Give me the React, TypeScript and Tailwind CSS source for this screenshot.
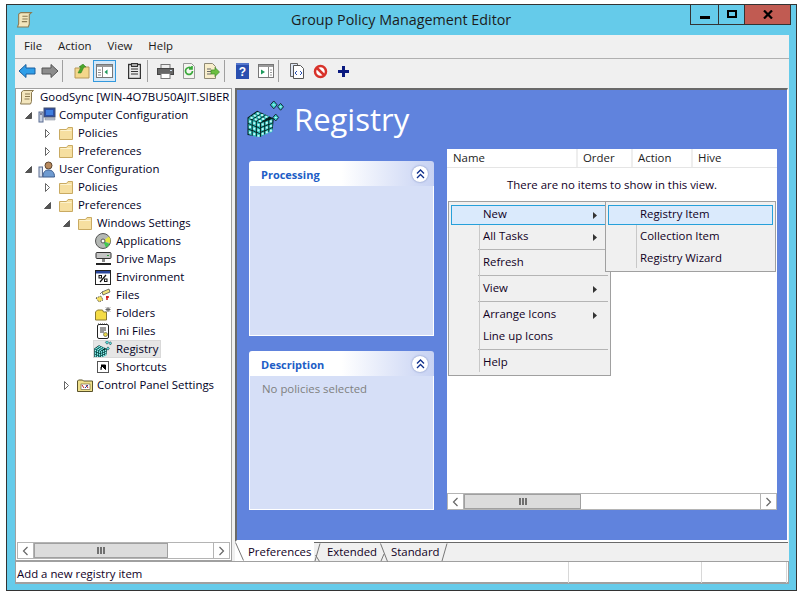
import type { ReactNode } from 'react';

const Folder = () => (
  <svg width="16" height="15" viewBox="0 0 16 15">
    <path d="M1.500 13.500V3.500h7l1.500-2h4.500v12z" fill="#f6dfa0" stroke="#c9aa62" />
    <path d="M2.500 4.500h11" stroke="#fdf3cf" />
  </svg>
);

const Scroll = ({ size = 16 }: { size?: number }) => (
  <svg width={size} height={size} viewBox="0 0 16 16" className="shrink-0">
    <path d="M4.500 1.500h10l-2 2v9l-1 2.500h-10l1-3v-9z" fill="#f3e6bd" stroke="#8a7a52" />
    <path d="M6 5h5M6 7.500h5M5.500 10h5" stroke="#8a7a52" />
  </svg>
);

const ExpandOpen = () => (
  <svg width="9" height="9" viewBox="0 0 9 9">
    <path d="M7.500 1.500v6h-6z" fill="#555" stroke="#555" />
  </svg>
);

const ExpandClosed = () => (
  <svg width="9" height="11" viewBox="0 0 9 11">
    <path d="M2.500 1.500l4 4-4 4z" fill="#fff" stroke="#666" />
  </svg>
);

const Monitor = () => (
  <svg width="18" height="16" viewBox="0 0 18 16">
    <rect x="6" y="1" width="11" height="9" fill="#2b4fa8" stroke="#44506a" />
    <rect x="8" y="3" width="7" height="5" fill="#3f7fe0" />
    <path d="M7 11h10v2H7z" fill="#bfc6d4" stroke="#7d8696" strokeWidth="0.500" />
    <rect x="1" y="5" width="4" height="10" fill="#c9d2e2" stroke="#5a6c92" />
    <path d="M2 7h2" stroke="#335" />
  </svg>
);

const UserIcon = () => (
  <svg width="18" height="17" viewBox="0 0 18 17">
    <circle cx="10.500" cy="4.500" r="3.500" fill="#b98a5e" stroke="#5c4630" />
    <path d="M5 16c0-5 2-7 5.500-7S16.500 11 16.500 16z" fill="#6f9bd0" stroke="#3f5f8f" />
    <rect x="1" y="6" width="3.500" height="10" fill="#d5deea" stroke="#5a6c92" />
  </svg>
);

const CdIcon = () => (
  <svg width="16" height="16" viewBox="0 0 16 16">
    <circle cx="8" cy="8" r="7.500" fill="#b4b8b4" stroke="#555" />
    <path d="M8 8L14 3.500A7.500 7.500 0 0 1 15 10z" fill="#e6e640" />
    <path d="M8 8L11 14.500A7.500 7.500 0 0 0 14.500 11z" fill="#40c850" />
    <circle cx="8" cy="8" r="2" fill="#fff" stroke="#555" />
  </svg>
);

const DriveIcon = () => (
  <svg width="17" height="16" viewBox="0 0 17 16">
    <rect x="1" y="1.500" width="15" height="6" rx="1" fill="#c4c4c4" stroke="#333" />
    <path d="M12 4.500h2" stroke="#2c9c3c" />
    <rect x="7" y="8" width="3" height="3" fill="#888" />
    <path d="M1 13h15" stroke="#222" strokeWidth="2" />
  </svg>
);

const EnvIcon = () => (
  <svg width="16" height="15" viewBox="0 0 16 15">
    <rect x="0.500" y="0.500" width="15" height="14" fill="#fff" stroke="#222" />
    <rect x="1" y="1" width="14" height="2.500" fill="#29469c" />
    <path d="M5 12l6-7" stroke="#111" strokeWidth="1.200" />
    <rect x="4" y="5.500" width="2.500" height="2.500" fill="none" stroke="#111" />
    <rect x="9.500" y="9" width="2.500" height="2.500" fill="none" stroke="#111" />
  </svg>
);

const FilesIcon = () => (
  <svg width="16" height="15" viewBox="0 0 16 15">
    <path d="M7 4l7-3 1 3-7 3z" fill="#f2e27a" stroke="#444" strokeWidth="0.700" />
    <path d="M1 10l5-2 2 4-4 2z" fill="#f6e060" stroke="#444" strokeDasharray="1 1" />
    <path d="M5 6l3-3" stroke="#444" strokeDasharray="1 1" />
    <path d="M11 9h3M12 8v4" stroke="#d01010" strokeWidth="1.500" />
  </svg>
);

const FoldersIcon = () => (
  <svg width="16" height="15" viewBox="0 0 16 15">
    <path d="M0.500 14V6l2-2h5l1 2h3v8z" fill="#f5dc45" stroke="#8a7a30" />
    <path d="M13 1v5M10.500 3.500h5M11 1.500l4 4M15 1.500l-4 4" stroke="#666" />
  </svg>
);

const IniIcon = () => (
  <svg width="14" height="16" viewBox="0 0 14 16">
    <rect x="1.500" y="1.500" width="11" height="14" rx="1.500" fill="#fff" stroke="#222" />
    <path d="M2 1h10" stroke="#444" strokeDasharray="1 1" />
    <path d="M4 5h6M4 7h6M4 9h4" stroke="#333" />
    <circle cx="9.500" cy="11.500" r="2" fill="#e8d84a" stroke="#665" strokeWidth="0.700" />
  </svg>
);

// one face of the cube: 3x3 cells along vectors a and b from the origin
function cubeFace(ox: number, oy: number, ax: number, ay: number, bx: number, by: number) {
  const cells: ReactNode[] = [];
  for (let i = 0; i < 3; i++) {
    for (let j = 0; j < 3; j++) {
      const x = ox + ax * i + bx * j;
      const y = oy + ay * i + by * j;
      const pts = [
        [x + 0.5, y + 0.5],
        [x + ax - 0.5, y + ay + 0.5],
        [x + ax + bx - 0.5, y + ay + by - 0.5],
        [x + bx + 0.5, y + by - 0.5],
      ];
      const cx = x + (ax + bx) / 2;
      const cy = y + (ay + by) / 2;
      cells.push(
        <g key={`${ox}-${i}-${j}`}>
          <polygon points={pts.map((p) => p.join(',')).join(' ')} fill="#2fc4c0" />
          <rect x={cx - 1} y={cy - 1} width="2" height="2" fill="#c9f7f4" />
        </g>,
      );
    }
  }
  return cells;
}

const RegistryIcon = ({ size = 18 }: { size?: number }) => (
  <svg width={size} height={size} viewBox="0 0 37 38" className="shrink-0">
    <path d="M0 18L10 11l17 8-1 11-13 8-13-2z" fill="#07201f" />
    {cubeFace(0.500, 18.500, 4.300, 1.700, 0, 5.600)}
    {cubeFace(13.500, 23.500, 4.200, -1.600, 0, 4.800)}
    {cubeFace(0.500, 18.500, 3.200, -2.200, 4.300, 1.700)}
    <path d="M23.500 5l3.500-4 3.500 4-3.500 4zM31 7l3-3.500L37 7l-3 3.500zM26 18l3-3.500 3 3.500-3 3.500z" fill="#3fd3ce" stroke="#123" strokeWidth="1" />
    <path d="M26 5h2M33 7h2M28 18h2" stroke="#d8fbf8" />
  </svg>
);

const ShortcutIcon = () => (
  <svg width="12" height="12" viewBox="0 0 12 12">
    <rect x="0.500" y="0.500" width="11" height="11" fill="#fff" stroke="#555" />
    <path d="M4 9V6l1.500-1.500M4 4h4.500v4.500z" fill="#000" stroke="#000" />
  </svg>
);

const ControlPanelIcon = () => (
  <svg width="16" height="13" viewBox="0 0 16 13">
    <path d="M0.500 12.500V2l1-1h4l1 1h9v10.500z" fill="#efe08c" stroke="#59522a" />
    <rect x="4" y="5" width="9" height="5.500" fill="#fff" stroke="#59522a" strokeWidth="0.600" />
    <path d="M5 6l2 3M9 6l2 3" stroke="#c02020" />
    <path d="M8 9l3-3" stroke="#2040a0" />
  </svg>
);

const tree: { label: string; depth: number; arrow?: 'open' | 'closed'; icon: ReactNode; selected?: boolean }[] = [
  { label: 'Computer Configuration', depth: 0, arrow: 'open', icon: <Monitor /> },
  { label: 'Policies', depth: 1, arrow: 'closed', icon: <Folder /> },
  { label: 'Preferences', depth: 1, arrow: 'closed', icon: <Folder /> },
  { label: 'User Configuration', depth: 0, arrow: 'open', icon: <UserIcon /> },
  { label: 'Policies', depth: 1, arrow: 'closed', icon: <Folder /> },
  { label: 'Preferences', depth: 1, arrow: 'open', icon: <Folder /> },
  { label: 'Windows Settings', depth: 2, arrow: 'open', icon: <Folder /> },
  { label: 'Applications', depth: 3, icon: <CdIcon /> },
  { label: 'Drive Maps', depth: 3, icon: <DriveIcon /> },
  { label: 'Environment', depth: 3, icon: <EnvIcon /> },
  { label: 'Files', depth: 3, icon: <FilesIcon /> },
  { label: 'Folders', depth: 3, icon: <FoldersIcon /> },
  { label: 'Ini Files', depth: 3, icon: <IniIcon /> },
  { label: 'Registry', depth: 3, icon: <RegistryIcon />, selected: true },
  { label: 'Shortcuts', depth: 3, icon: <ShortcutIcon /> },
  { label: 'Control Panel Settings', depth: 2, arrow: 'closed', icon: <ControlPanelIcon /> },
];

const depthPad = ['pl-[6px]', 'pl-[25px]', 'pl-[44px]', 'pl-[76px]'];

function TreeRow({ row }: { row: (typeof tree)[number] }) {
  return (
    <div className={`flex h-[18px] items-center ${depthPad[row.depth]}`}>
      {row.arrow && (
        <span className="flex w-[10px] shrink-0 justify-center">
          {row.arrow === 'open' ? <ExpandOpen /> : <ExpandClosed />}
        </span>
      )}
      <span className={`flex h-[18px] items-center ${row.selected ? 'bg-[#e6e6e6] outline outline-[#d9d9d9] -outline-offset-1' : ''} ${row.arrow ? 'ml-[4px]' : ''}`}>
        <span className="flex w-[20px] shrink-0 justify-center">{row.icon}</span>
        <span className={`pr-[3px] whitespace-nowrap text-[#00001e] ${row.arrow ? 'pl-[2px]' : 'pl-[3px]'}`}>{row.label}</span>
      </span>
    </div>
  );
}

function ScrollBar({ thumb }: { thumb: string }) {
  return (
    <div className="flex h-[17px] bg-white border border-[#b4b4b4]">
      <span className="flex w-[16px] items-center justify-center border-r border-[#b4b4b4]">
        <svg width="7" height="10" viewBox="0 0 7 10"><path d="M5.500 1L1.500 5l4 4" fill="none" stroke="#666" strokeWidth="1.200" /></svg>
      </span>
      <span className={`flex items-center justify-center gap-px bg-[#dcdcdc] border border-[#a0a0a0] ${thumb}`}>
        <i className="h-[7px] w-[2px] bg-[#707070]" />
        <i className="h-[7px] w-[2px] bg-[#707070]" />
        <i className="h-[7px] w-[2px] bg-[#707070]" />
      </span>
      <span className="flex-1" />
      <span className="flex w-[16px] items-center justify-center border-l border-[#b4b4b4]">
        <svg width="7" height="10" viewBox="0 0 7 10"><path d="M1.500 1l4 4-4 4" fill="none" stroke="#666" strokeWidth="1.200" /></svg>
      </span>
    </div>
  );
}

function ToolButton({ children, active }: { children: ReactNode; active?: boolean }) {
  return (
    <span className={`flex h-[22px] w-[23px] items-center justify-center ${active ? 'bg-[#d5e8f7] border border-[#3399dd]' : ''}`}>
      {children}
    </span>
  );
}

const Sep = () => <span className="ml-px h-[22px] w-px bg-[#a0a0a0]" />;

function Toolbar() {
  return (
    <div className="flex h-[30px] items-start border-t border-[#b0b0b0] pt-px">
      <ToolButton>
        <svg width="18" height="16" viewBox="0 0 18 16"><path d="M1 8l7-6.500V5h9v6H8v3.500z" fill="#2f9ee8" stroke="#1a5f9e" /></svg>
      </ToolButton>
      <ToolButton>
        <svg width="18" height="16" viewBox="0 0 18 16"><path d="M17 8l-7-6.500V5H1v6h9v3.500z" fill="#8c8c8c" stroke="#555" /></svg>
      </ToolButton>
      <Sep />
      <span className="w-[7px]" />
      <ToolButton>
        <svg width="16" height="15" viewBox="0 0 16 15">
          <path d="M1 14V4h5l1-1h8v11z" fill="#f4d78a" stroke="#b8995a" />
          <path d="M4 9l3-6-2 0 4-3 3 3-2 0-3 6z" fill="#4aa82c" stroke="#2c7a1c" strokeWidth="0.500" />
        </svg>
      </ToolButton>
      <ToolButton active>
        <svg width="17" height="14" viewBox="0 0 17 14">
          <rect x="0.500" y="0.500" width="16" height="13" fill="#fff" stroke="#777" />
          <rect x="1" y="1" width="15" height="2" fill="#9a9a9a" />
          <path d="M6.500 3v10" stroke="#888" />
          <path d="M2 6h3M2 8.500h3M2 11h3" stroke="#888" />
          <path d="M11.500 5.500v5L8.500 8z" fill="#1d9a5c" />
        </svg>
      </ToolButton>
      <span className="w-[7px]" />
      <ToolButton>
        <svg width="13" height="16" viewBox="0 0 13 16">
          <rect x="0.500" y="1.500" width="12" height="14" fill="#e8e8e8" stroke="#333" strokeWidth="1.400" />
          <rect x="3.500" y="0.500" width="6" height="3" fill="#aaa" stroke="#333" />
          <path d="M3 6h7M3 8.500h7M3 11h7" stroke="#333" />
        </svg>
      </ToolButton>
      <Sep />
      <span className="w-[6px]" />
      <ToolButton>
        <svg width="17" height="15" viewBox="0 0 17 15">
          <rect x="4" y="0.500" width="9" height="4" fill="#eee" stroke="#777" />
          <rect x="0.500" y="4.500" width="16" height="6" fill="#666" stroke="#444" />
          <rect x="4" y="9.500" width="9" height="5" fill="#fff" stroke="#777" />
          <path d="M13 6.500h2" stroke="#cde" />
        </svg>
      </ToolButton>
      <ToolButton>
        <svg width="14" height="16" viewBox="0 0 14 16">
          <path d="M1.500 0.500h8l3 3v12h-11z" fill="#f5f5f0" stroke="#999" />
          <path d="M10.500 8a3.500 3.500 0 1 1-1-2.500M10 3v3H7" fill="none" stroke="#38a83a" strokeWidth="1.700" />
        </svg>
      </ToolButton>
      <ToolButton>
        <svg width="17" height="16" viewBox="0 0 17 16">
          <path d="M1.500 0.500h8l3 3v12h-11z" fill="#f8eecb" stroke="#8f8a75" />
          <path d="M4 6h4M4 8.500h4M4 11h4" stroke="#666" />
          <path d="M8 7h4V4.500L16.500 9 12 13.500V11H8z" fill="#6cbf3f" stroke="#3f8a2a" strokeWidth="0.700" />
        </svg>
      </ToolButton>
      <Sep />
      <span className="w-[6px]" />
      <ToolButton>
        <svg width="13" height="16" viewBox="0 0 13 16">
          <rect width="13" height="16" fill="#2a4fb0" />
          <path d="M0 0h13v2H0z" fill="#5577cc" />
          <text x="6.500" y="13" textAnchor="middle" fontSize="12" fontWeight="700" fontFamily="Liberation Sans, sans-serif" fill="#fff">?</text>
        </svg>
      </ToolButton>
      <ToolButton>
        <svg width="16" height="14" viewBox="0 0 16 14">
          <rect x="0.500" y="0.500" width="15" height="13" fill="#fff" stroke="#777" />
          <rect x="1" y="1" width="14" height="2" fill="#9a9a9a" />
          <path d="M10.500 3v10" stroke="#888" />
          <path d="M3 5.500v5L7 8z" fill="#1d9a5c" />
          <path d="M12 6h2M12 8.500h2M12 11h2" stroke="#999" />
        </svg>
      </ToolButton>
      <Sep />
      <span className="w-[7px]" />
      <ToolButton>
        <svg width="15" height="16" viewBox="0 0 15 16">
          <path d="M0.500 0.500h7v13h-7z" fill="#dfe7f4" stroke="#666" />
          <path d="M3.500 2.500h7l3 3v10h-10z" fill="#fff" stroke="#555" />
          <path d="M7 8l-2 2 2 2M10 8l2 2-2 2" fill="none" stroke="#2a4fb0" />
        </svg>
      </ToolButton>
      <ToolButton>
        <svg width="15" height="15" viewBox="0 0 15 15">
          <circle cx="7.500" cy="7.500" r="5.500" fill="#fff" stroke="#d8322a" strokeWidth="2.500" />
          <path d="M3.500 3.500l8 8" stroke="#d8322a" strokeWidth="2.500" />
        </svg>
      </ToolButton>
      <ToolButton>
        <svg width="11" height="11" viewBox="0 0 11 11"><path d="M4 0h3v4h4v3H7v4H4V7H0V4h4z" fill="#0a1a80" /></svg>
      </ToolButton>
    </div>
  );
}

function TaskPanel({ title, height, children }: { title: string; height: string; children?: ReactNode }) {
  return (
    <div className="w-[185px]">
      <div className="flex h-[25px] items-center justify-between rounded-t-[3px] bg-gradient-to-r from-white via-white to-[#c7d2f3] pl-[12px] pr-[6px]">
        <span className="pt-[3px] text-[11px] font-bold text-[#215dc6]">{title}</span>
        <span className="flex h-[16px] w-[16px] items-center justify-center rounded-full bg-white shadow-[0_0_2px_#6a7fb8]">
          <svg width="9" height="10" viewBox="0 0 9 10"><path d="M1 4.500l3.500-3.500L8 4.500M1 9l3.500-3.500L8 9" fill="none" stroke="#0f2f8c" strokeWidth="1.300" /></svg>
        </span>
      </div>
      <div className={`border-x border-b border-white bg-[#d6dff7] px-[12px] pt-[4px] text-[#7f7f7f] ${height}`}>{children}</div>
    </div>
  );
}

function MenuItem({ label, sub, hot }: { label: string; sub?: boolean; hot?: boolean }) {
  return (
    <div className={`relative flex items-center pl-[32px] pr-[10px] ${hot ? 'my-px h-[20px] bg-[#daeafc] outline outline-[#26a0da] -outline-offset-1' : 'h-[22px]'}`}>
      <span className="flex-1 whitespace-nowrap pb-[2px] text-[#10001e]">{label}</span>
      {sub && <svg width="5" height="7" viewBox="0 0 5 7"><path d="M0 0l4 3.500L0 7z" fill="#333" /></svg>}
    </div>
  );
}

const MenuLine = () => <div className="mt-px mb-[2px] ml-[27px] h-px bg-[#b4b4b4]" />;

// the slanted edges where two tabs meet
const TabEdge = ({ d, width }: { d: string; width: number }) => (
  <svg width={width} height="19" viewBox={`0 0 ${width} 19`} className="shrink-0">
    <path d={d} fill="none" stroke="#777" />
  </svg>
);

export default function App() {
  return (
    <div className="h-[600px] w-[803px] overflow-hidden bg-white pl-[6px] pt-[4px] font-['Open_Sans','Noto_Sans',sans-serif] text-[11.4px] text-black">
      <div className="h-[587px] w-[791px] border border-[#333] bg-[#65cbea] pl-[8px]">
        {/* title bar */}
        <div className="flex h-[30px] items-start">
          <span className="mt-[6px] ml-[1px]"><Scroll size={17} /></span>
          <div className="flex-1 pl-[258px] pt-[4px] text-[14.3px] text-[#1c1c1c]">Group Policy Management Editor</div>
          <div className="mr-[5px] flex h-[20px] border border-t-0 border-[#333]">
            <span className="flex w-[28px] items-center justify-center border-r border-[#333]"><i className="mt-[5px] h-[3px] w-[10px] bg-black" /></span>
            <span className="flex w-[25px] items-center justify-center"><i className="mb-[2px] h-[8px] w-[10px] border-2 border-black" /></span>
            <span className="flex w-[46px] items-center justify-center border-l border-[#333] bg-[#c15b52]">
              <svg width="10" height="9" viewBox="0 0 10 9"><path d="M1 0.500l8 8M9 0.500l-8 8" stroke="#000" strokeWidth="2.200" /></svg>
            </span>
          </div>
        </div>

        <div className="h-[549px] w-[774px] bg-[#f0f0f0]">
          {/* menu */}
          <div className="flex h-[23px] items-center gap-[16px] pb-[2px] pl-[9px] text-[#1a1a1a]">
            <span>File</span>
            <span>Action</span>
            <span>View</span>
            <span>Help</span>
          </div>
          <Toolbar />

          <div className="flex h-[473px]">
            {/* tree */}
            <div className="flex w-[217px] flex-col border border-[#a0a0a0] bg-white p-px">
              <div className="flex-1 overflow-hidden">
                <div className="-mt-[2px] flex h-[18px] items-center whitespace-nowrap pl-[2px] text-[#00001e]">
                  <Scroll />
                  <span className="ml-[5px]">GoodSync [WIN-4O7BU50AJIT.SIBER</span>
                </div>
                {tree.map((row, i) => <TreeRow key={i} row={row} />)}
              </div>
              <ScrollBar thumb="w-[134px]" />
            </div>

            {/* details */}
            <div className="ml-[3px] mr-px flex flex-1 flex-col">
              <div className="flex h-[454px] flex-col border-t-2 border-l-2 border-r border-b-2 border-t-[#696969] border-l-[#696969] border-r-white border-b-white bg-[#6083dd]">
                <div className="flex h-[59px] items-start pl-[10px]">
                  <span className="mt-[10px]"><RegistryIcon size={37} /></span>
                  <span className="ml-[10px] mt-[5px] text-[31px] leading-[48px] text-white">Registry</span>
                </div>
                <div className="relative flex flex-1 pl-[12px]">
                  <div className="mt-[12px] flex flex-col gap-[15px]">
                    <TaskPanel title="Processing" height="h-[150px]" />
                    <TaskPanel title="Description" height="h-[134px]">No policies selected</TaskPanel>
                  </div>
                  <div className="ml-[13px] flex h-[361px] w-[330px] flex-col bg-white">
                    <div className="flex h-[19px] items-center border-b border-[#e5e5e5] text-[#222]">
                      <span className="h-full w-[131px] border-r-2 border-[#eee] pl-[6px]">Name</span>
                      <span className="h-full w-[55px] border-r-2 border-[#eee] pl-[5px]">Order</span>
                      <span className="h-full w-[60px] border-r-2 border-[#eee] pl-[5px]">Action</span>
                      <span className="h-full flex-1 pl-[5px]">Hive</span>
                    </div>
                    <div className="flex-1 pt-[8px] text-center text-[#10001e]">There are no items to show in this view.</div>
                    <ScrollBar thumb="w-[117px]" />
                  </div>
                  {/* context menu */}
                  <div className="absolute left-[211px] top-[52px] w-[163px] border border-[#a0a0a0] bg-[#f0f0f0] px-[2px] pt-[2px] pb-px">
                    <div className="absolute bottom-[3px] left-[30px] top-[3px] w-px bg-[#c8c8c8]" />
                    <MenuItem label="New" sub hot />
                    <MenuItem label="All Tasks" sub />
                    <MenuLine />
                    <MenuItem label="Refresh" />
                    <MenuLine />
                    <MenuItem label="View" sub />
                    <MenuLine />
                    <MenuItem label="Arrange Icons" sub />
                    <MenuItem label="Line up Icons" />
                    <MenuLine />
                    <MenuItem label="Help" />
                  </div>
                  <div className="absolute left-[368px] top-[52px] w-[171px] border border-[#a0a0a0] bg-[#f0f0f0] px-[2px] pt-[2px] pb-px">
                    <div className="absolute bottom-[3px] left-[30px] top-[3px] w-px bg-[#c8c8c8]" />
                    <MenuItem label="Registry Item" hot />
                    <MenuItem label="Collection Item" />
                    <MenuItem label="Registry Wizard" />
                  </div>
                </div>
              </div>
              {/* tabs */}
              <div className="flex h-[19px] items-start border-t border-[#696969] text-[#10001e]">
                <div className="-mt-px flex h-[19px] bg-white">
                  <TabEdge width={9} d="M0.500 0.500l8 18" />
                  <span className="w-[70px] pl-[4px] pt-px">Preferences</span>
                </div>
                <TabEdge width={7} d="M6 0.500L1 18M1.500 12l4 6.500" />
                <span className="w-[59px] pl-[6px]">Extended</span>
                <TabEdge width={9} d="M0.500 0.500l7 18M4 11l-3 7" />
                <span className="w-[52px] pl-[2px]">Standard</span>
                <TabEdge width={7} d="M6 0.500L1 18" />
              </div>
            </div>
          </div>

          {/* status bar */}
          <div className="flex h-[23px] items-center border border-b-2 border-[#a0a0a0] bg-white">
            <span className="w-[552px] pl-[1px] pt-[3px] text-[#10001e]">Add a new registry item</span>
            <span className="h-[21px] w-[133px] border-l border-[#d8d8d8]" />
            <span className="mr-px h-[21px] flex-1 border-x border-[#d8d8d8]" />
          </div>
        </div>
      </div>
    </div>
  );
}
